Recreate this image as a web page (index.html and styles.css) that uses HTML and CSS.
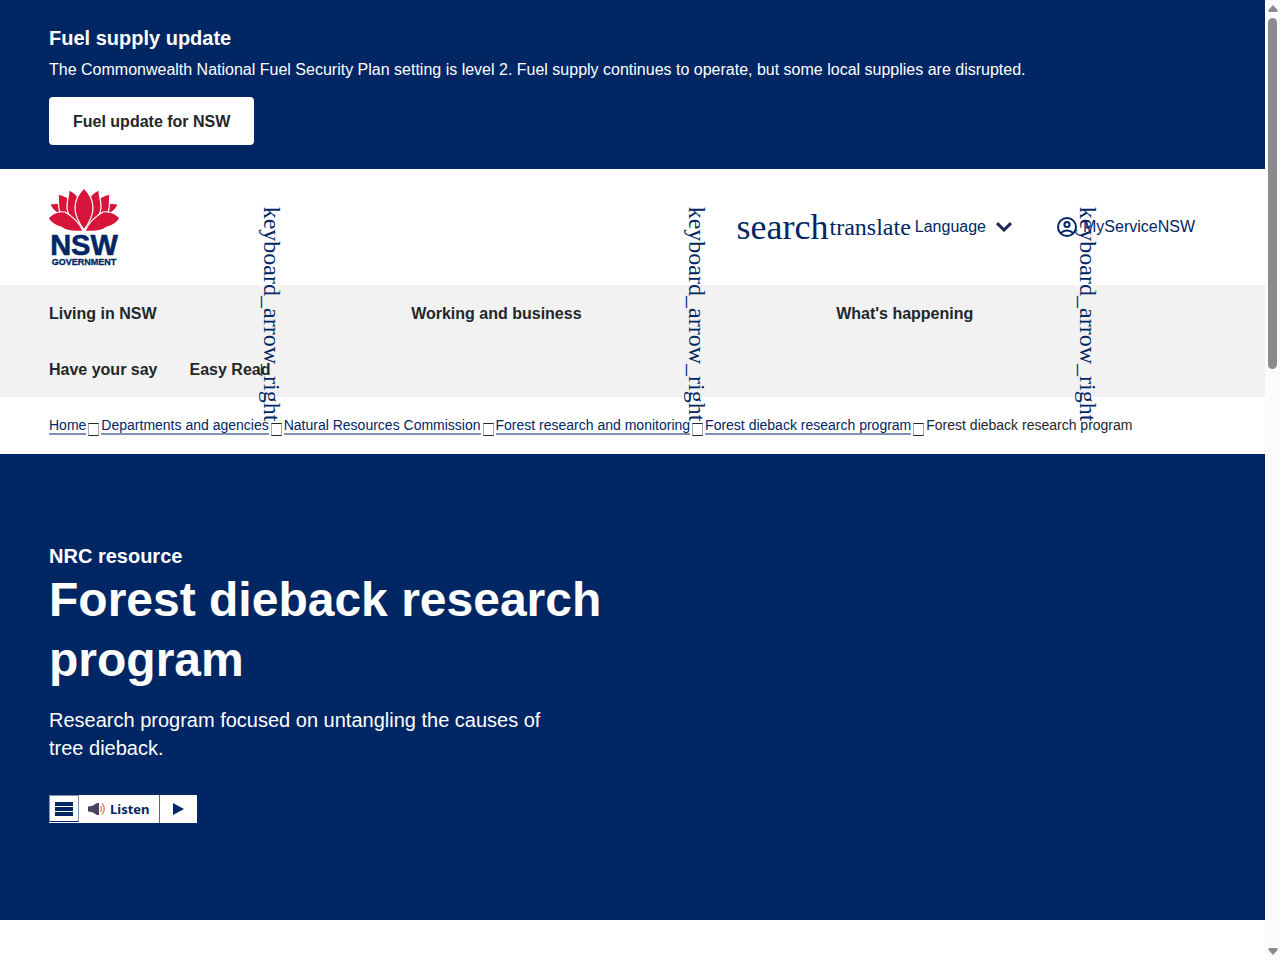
FILE: index.html
```html
<!DOCTYPE html>
<html lang="en">
<head>
    <meta charset="UTF-8">
    <meta name="viewport" content="width=device-width, initial-scale=1">
    <title>Forest dieback research program | NSW Government</title>
    <link rel="stylesheet" href="styles.css">
</head>
<body>
    <div class="page">
        <!-- Site notice -->
        <section class="notice">
            <h2 class="notice-title">Fuel supply update</h2>
            <p class="notice-text">The Commonwealth National Fuel Security Plan setting is level 2. Fuel supply continues to operate, but some local supplies are disrupted.</p>
            <a href="#" class="notice-button">Fuel update for NSW</a>
        </section>

        <!-- Header -->
        <header class="header">
            <a href="#" class="logo" aria-label="NSW Government">
                <svg width="70" height="76" viewBox="0 0 70 76">
                    <g fill="#d7153a" stroke="#fff" stroke-width="1.2" stroke-linejoin="round">
                        <path d="M1 15L12 14L20 27L8 24C5 22 2 19 1 15Z"/>
                        <path d="M69 15L58 14L50 27L62 24C65 22 68 19 69 15Z"/>
                        <path d="M9 5C14 6 18 8 21 11L32 41C20 37 12 29 10 20C9 14 10 10 9 5Z"/>
                        <path d="M61 5C56 6 52 8 49 11L38 41C50 37 58 29 60 20C61 14 60 10 61 5Z"/>
                        <path d="M20 1C25 3 28 6 30 10L34 40C25 34 18 26 18 18C18 11 20 7 20 1Z"/>
                        <path d="M50 1C45 3 42 6 40 10L36 40C45 34 52 26 52 18C52 11 50 7 50 1Z"/>
                        <path d="M35 -1C41 5 44 12 44 19C44 27 40 34 35 41C30 34 26 27 26 19C26 12 29 5 35 -1Z"/>
                        <path d="M-1 29C4 24 10 22 16 23C23 27 30 33 34 42C26 43 17 42 12 38C7 37 2 34 -1 29Z"/>
                        <path d="M71 29C66 24 60 22 54 23C47 27 40 33 36 42C44 43 53 42 58 38C63 37 68 34 71 29Z"/>
                    </g>
                    <g fill="#002664" font-family="Liberation Sans, Arial, sans-serif" font-weight="bold" text-anchor="middle">
                        <text x="35" y="66" font-size="29" stroke="#002664" stroke-width="0.6">NSW</text>
                        <text x="35" y="76" font-size="9" stroke="#002664" stroke-width="0.3">GOVERNMENT</text>
                    </g>
                </svg>
            </a>
            <div class="header-tools">
                <button type="button" class="tool search"><span class="icon-text icon-large">search</span></button>
                <button type="button" class="tool language">
                    <span class="icon-text">translate</span>
                    <span>Language</span>
                    <svg class="chevron" width="16" height="10" viewBox="0 0 16 10" fill="none" stroke="#22275b" stroke-width="3"><path d="M1 1.200L8 8L15 1.200"/></svg>
                </button>
                <button type="button" class="tool account">
                    <svg width="20" height="20" viewBox="0 0 20 20" fill="none" stroke="#002664" stroke-width="2">
                        <circle cx="10" cy="10" r="9"/>
                        <circle cx="10" cy="7.500" r="2.600"/>
                        <path d="M4 16C7 12.800 13 12.800 16 16"/>
                    </svg>
                    <span>MyServiceNSW</span>
                </button>
            </div>
        </header>

        <!-- Main navigation -->
        <nav class="main-nav" aria-label="Main">
            <a href="#">Living in NSW<span class="icon-text arrow">keyboard_arrow_right</span></a>
            <a href="#">Working and business<span class="icon-text arrow">keyboard_arrow_right</span></a>
            <a href="#">What's happening<span class="icon-text arrow">keyboard_arrow_right</span></a>
            <a href="#">Have your say</a>
            <a href="#">Easy Read</a>
        </nav>

        <!-- Breadcrumbs -->
        <nav aria-label="Breadcrumbs">
            <ol class="breadcrumbs">
                <li><a href="#">Home</a></li>
                <li><a href="#">Departments and agencies</a></li>
                <li><a href="#">Natural Resources Commission</a></li>
                <li><a href="#">Forest research and monitoring</a></li>
                <li><a href="#">Forest dieback research program</a></li>
                <li>Forest dieback research program</li>
            </ol>
        </nav>

        <!-- Page banner -->
        <main class="hero">
            <div class="hero-content">
                <p class="hero-label">NRC resource</p>
                <h1>Forest dieback research program</h1>
                <p class="hero-intro">Research program focused on untangling the causes of tree dieback.</p>
            </div>
            <div class="player">
                <button type="button" class="player-menu" aria-label="Menu">
                    <svg width="18" height="14" viewBox="0 0 18 14" fill="#002664"><path d="M0 0h18v4H0zM0 5h18v4H0zM0 10h18v4H0z"/></svg>
                </button>
                <button type="button" class="player-listen">
                    <svg width="18" height="14" viewBox="0 0 18 14" fill="none">
                        <path d="M0 4.500L4 4L9 1H11V13H9L4 10L0 9.500Z" fill="#46425f"/>
                        <path d="M12.500 4Q14.500 7 12.500 10M14 1.500Q18.500 7 14 12.500" stroke="#e8744f" stroke-width="1.300"/>
                    </svg>
                    <span>Listen</span>
                </button>
                <button type="button" class="player-play" aria-label="Play">
                    <svg width="11" height="12" viewBox="0 0 11 12" fill="#002664"><path d="M0 0L11 6L0 12Z"/></svg>
                </button>
            </div>
        </main>
    </div>

    <!-- Scroll track -->
    <div class="scroll" aria-hidden="true">
        <svg width="10" height="7" viewBox="0 0 10 7" fill="#8b8b8b"><path d="M5 0L9.500 5Q10 7 8.500 7H1.500Q0 7 .5 5Z"/></svg>
        <div class="scroll-track"><div class="scroll-thumb"></div></div>
        <svg width="10" height="7" viewBox="0 0 10 7" fill="#8b8b8b"><path d="M5 7L9.500 2Q10 0 8.500 0H1.500Q0 0 .5 2Z"/></svg>
    </div>
</body>
</html>
```
FILE: styles.css
```css
*,
*::after {
    box-sizing: border-box;
    margin: 0;
    padding: 0;
}

body {
    display: flex;
    align-items: flex-start;
    background: #fff;
    color: #22272b;
    font-family: "Liberation Sans", Arial, sans-serif;
    font-size: 16px;
    line-height: 24px;
}

button {
    border: none;
    background: none;
    color: inherit;
    font: inherit;
    cursor: pointer;
}

a {
    color: inherit;
    text-decoration: none;
}

.page {
    flex: 1;
    min-width: 0;
}

/* Site notice */
.notice {
    padding: 24px 49px;
    background: #002664;
    color: #fff;
}

.notice-title {
    margin-bottom: 6px;
    font-size: 20px;
    line-height: 28px;
}

.notice-text {
    margin-bottom: 15px;
}

.notice-button {
    display: inline-block;
    padding: 13px 24px 11px;
    border-radius: 4px;
    background: #fff;
    color: #22272b;
    font-weight: bold;
    vertical-align: top;
}

/* Header */
.header {
    display: flex;
    align-items: center;
    justify-content: space-between;
    padding: 20px 49px;
    color: #002664;
}

.logo svg {
    display: block;
    overflow: visible;
}

.header-tools,
.tool {
    display: flex;
    align-items: center;
}

.search {
    margin-right: 1px;
}

.language {
    gap: 4px;
}

.language .chevron {
    margin-left: 6px;
}

.account {
    gap: 6px;
    margin-left: 24px;
    padding: 0 21px;
}

/* Icon names, shown as words when the icon font is missing */
.icon-text {
    color: #002664;
    font-family: "Liberation Serif", "Times New Roman", serif;
    font-size: 24px;
    font-weight: normal;
    line-height: 24px;
}

.icon-large {
    font-size: 36px;
    line-height: 36px;
}

/* Main navigation */
.main-nav {
    display: flex;
    flex-wrap: wrap;
    padding: 0 23px 0 33px;
    background: #f2f2f2;
}

.main-nav a {
    display: flex;
    align-items: center;
    padding: 17px 16px 15px;
    font-weight: bold;
}

.arrow {
    margin-left: 8px;
    transform: rotate(90deg);
}

/* Breadcrumbs */
.breadcrumbs {
    display: flex;
    flex-wrap: wrap;
    padding: 18px 49px;
    font-size: 14px;
    line-height: 20px;
    list-style: none;
}

.breadcrumbs li {
    display: flex;
    align-items: flex-start;
}

.breadcrumbs a {
    height: 20px;
    border-bottom: 2px solid #8092b1;
    color: #002664;
}

.breadcrumbs li:not(:last-child)::after {
    content: "";
    width: 11px;
    height: 13px;
    margin: 8px 2px 0;
    border: 1px solid #22272b;
    border-right-color: #b0a4aa;
    border-left-color: #a4b0b8;
}

/* Page banner */
.hero {
    padding: 88px 49px 97px;
    background: #002664;
    color: #fff;
}

.hero-content {
    max-width: 568px;
}

.hero-label {
    font-size: 20px;
    font-weight: bold;
    line-height: 28px;
}

h1 {
    margin-bottom: 16px;
    font-size: 48px;
    line-height: 60px;
}

.hero-intro {
    max-width: 520px;
    font-size: 20px;
    line-height: 28px;
}

/* Listen player */
.player {
    display: flex;
    width: max-content;
    height: 28px;
    margin-top: 33px;
    background: #fff;
    color: #002664;
}

.player button {
    display: flex;
    align-items: center;
    justify-content: center;
}

.player .player-menu {
    width: 30px;
    height: 27px;
    border: 1px solid #8092b1;
    border-bottom-color: #002664;
}

.player .player-listen {
    gap: 4px;
    padding: 0 9px;
    border-right: 1px solid #54698f;
    font: bold 13px "Noto Sans", sans-serif;
}

.player-play {
    width: 37px;
}

/* Scroll track */
.scroll {
    position: sticky;
    top: 0;
    display: flex;
    flex-direction: column;
    align-items: center;
    gap: 6px;
    width: 15px;
    height: 100vh;
    padding: 5px 0;
    background: #fcfcfc;
}

.scroll-track {
    flex: 1;
    width: 9px;
}

.scroll-thumb {
    height: 38%;
    border-radius: 5px;
    background: #8b8b8b;
}
```
